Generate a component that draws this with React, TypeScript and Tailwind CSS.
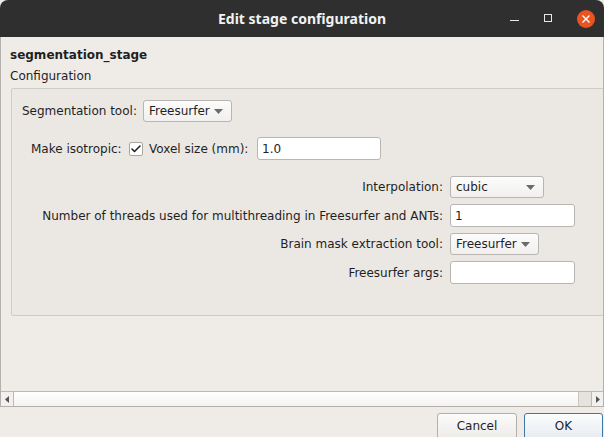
import { Check } from "lucide-react";

const font = { fontFamily: '"DejaVu Sans", sans-serif' };

function Combo({ value, width }: { value: string; width: string }) {
  return (
    <div
      className={`${width} h-[22px] flex items-center justify-between pl-[5px] pr-[8px] rounded-[3px] border border-[#b9b5b0] bg-gradient-to-b from-[#fcfcfc] to-[#f1f0ee] text-[#1f1f1f]`}
    >
      <span>{value}</span>
      <svg width="9" height="5" viewBox="0 0 9 5">
        <path d="M0 0 H9 L4.5 5 Z" fill="#6b6b6b" />
      </svg>
    </div>
  );
}

function Field({ value, width }: { value: string; width: string }) {
  return (
    <div
      className={`${width} h-[23px] flex items-center px-[4px] rounded-[3px] border border-[#b9b5b0] bg-white text-[#1f1f1f]`}
    >
      {value}
    </div>
  );
}

export default function App() {
  return (
    <div
      className="w-[604px] h-[437px] overflow-hidden flex flex-col bg-[#efece8] text-[12px] text-[#1f1f1f] whitespace-nowrap"
      style={font}
    >
      {/* title bar */}
      <div className="h-[37px] shrink-0 rounded-t-[8px] bg-[#2f2f2f] flex items-center relative">
        <div
          className="flex-1 text-center text-[#f2f2f2] font-bold text-[14px]"
          style={{ fontFamily: '"Noto Sans", sans-serif' }}
        >
          Edit stage configuration
        </div>
        <div className="absolute right-[9px] top-0 h-[37px] flex items-center gap-[25px]">
          <div className="w-[9px] h-[1px] bg-[#e8e8e8] mt-[4px]" />
          <div className="w-[8px] h-[8px] border border-[#e8e8e8] -mt-[1px]" />
          <div className="w-[18px] h-[18px] rounded-full bg-[#e95420] flex items-center justify-center">
            <svg width="8" height="8" viewBox="0 0 8 8">
              <path d="M0.5 0.5 L7.5 7.5 M7.5 0.5 L0.5 7.5" stroke="white" strokeWidth="1.4" />
            </svg>
          </div>
        </div>
      </div>

      {/* scroll area */}
      <div className="h-[370px] shrink-0 border-x border-b border-[#b4b0ab] flex flex-col">
        <div className="flex-1 overflow-hidden pl-[9px]">
          <div className="font-bold text-[12px] mt-[11px] leading-[15px]">segmentation_stage</div>
          <div className="mt-[6px] leading-[15px]">Configuration</div>
          <div className="mt-[4px] ml-[1px] w-[640px] h-[228px] border border-[#cfcbc6] rounded-[2px] bg-[#ebe8e4]">
            <div className="flex items-center mt-[11px] pl-[10px] gap-[7px]">
              <span className="w-[114px]">Segmentation tool:</span>
              <Combo value="Freesurfer" width="w-[89px]" />
            </div>
            <div className="flex items-center mt-[15px] pl-[19px]">
              <span className="w-[98px]">Make isotropic:</span>
              <div className="w-[14px] h-[14px] border border-[#a9a5a0] bg-white rounded-[2px] flex items-center justify-center">
                <Check size={12} strokeWidth={3} className="text-[#1a1a1a]" />
              </div>
              <span className="ml-[6px] w-[108px]">Voxel size (mm):</span>
              <Field value="1.0" width="w-[124px]" />
            </div>
            <div className="grid grid-cols-[431px_auto] gap-x-[7px] justify-start items-center mt-[16px]">
              <span className="text-right">Interpolation:</span>
              <div className="h-[22px] flex items-center">
                <Combo value="cubic" width="w-[94px]" />
              </div>
              <span className="text-right mt-[6px]">Number of threads used for multithreading in Freesurfer and ANTs:</span>
              <div className="mt-[6px]">
                <Field value="1" width="w-[125px]" />
              </div>
              <span className="text-right mt-[6px]">Brain mask extraction tool:</span>
              <div className="mt-[6px]">
                <Combo value="Freesurfer" width="w-[89px]" />
              </div>
              <span className="text-right mt-[6px]">Freesurfer args:</span>
              <div className="mt-[6px]">
                <Field value="" width="w-[125px]" />
              </div>
            </div>
          </div>
        </div>

        {/* horizontal scrollbar */}
        <div className="h-[15px] shrink-0 border-t border-[#bdb9b4] flex bg-gradient-to-b from-[#ffffff] to-[#f4f3f1]">
          <div className="w-[13px] border-r border-[#bdb9b4] flex items-center justify-center bg-[#f3f1ee]">
            <svg width="4" height="7" viewBox="0 0 4 7">
              <path d="M4 0 V7 L0 3.5 Z" fill="#555" />
            </svg>
          </div>
          <div className="flex-1" />
          <div className="w-[13px] border-l border-[#c8c4bf] bg-[#e6e3df]" />
          <div className="w-[12px] border-l border-[#bdb9b4] flex items-center justify-center bg-[#f3f1ee]">
            <svg width="4" height="7" viewBox="0 0 4 7">
              <path d="M0 0 V7 L4 3.5 Z" fill="#555" />
            </svg>
          </div>
        </div>
      </div>

      {/* buttons */}
      <div className="flex justify-end gap-[7px] pt-[6px] pr-[1px]">
        <div className="w-[80px] h-[27px] rounded-[3px] border border-[#b3afaa] bg-gradient-to-b from-[#fbfbfa] to-[#edebe8] flex items-center justify-center pb-[2px]">
          Cancel
        </div>
        <div className="w-[79px] h-[27px] rounded-[3px] border border-[#3f76ab] bg-gradient-to-b from-[#fbfcfd] to-[#e6ebf0] flex items-center justify-center pb-[2px]">
          OK
        </div>
      </div>
    </div>
  );
}
